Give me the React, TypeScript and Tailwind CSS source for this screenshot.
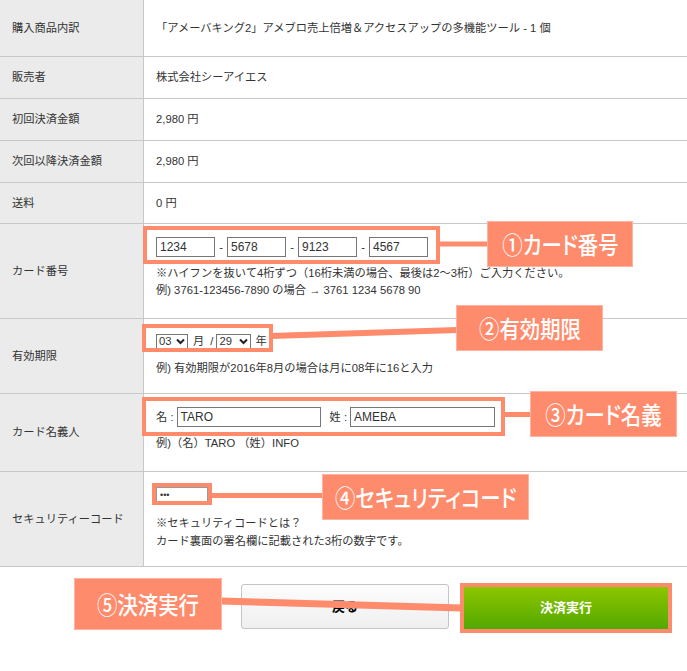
import React from 'react';

const rows = [
  { label: '購入商品内訳', value: '「アメーバキング2」アメブロ売上倍増＆アクセスアップの多機能ツール - 1 個', h: 'h-[57px]' },
  { label: '販売者', value: '株式会社シーアイエス', h: 'h-[42px]' },
  { label: '初回決済金額', value: '2,980 円', h: 'h-[42px]' },
  { label: '次回以降決済金額', value: '2,980 円', h: 'h-[42px]' },
  { label: '送料', value: '0 円', h: 'h-[41px]' },
];

const Select = ({ value, w }: { value: string; w: string }) => (
  <div className={`${w} h-[15px] border border-[#767676] flex items-center justify-between pl-[2px] pr-[2px] leading-none bg-white`}>
    <span>{value}</span>
    <svg width="9" height="7" viewBox="0 0 9 7">
      <path d="M1 1.5 L4.5 5 L8 1.5" stroke="#222" strokeWidth="2" fill="none" />
    </svg>
  </div>
);

const Callout = ({ text, cls }: { text: string; cls: string }) => (
  <div
    className={`absolute ${cls} bg-[#ff8b6d] border border-[#ffb39e] flex items-center justify-center text-white font-['Noto_Sans_CJK_JP',sans-serif] [font-feature-settings:'palt'] leading-none whitespace-nowrap`}
  >
    <span className="inline-block text-[24px] font-medium scale-x-[0.85]">{text}</span>
  </div>
);

const App = () => {
  return (
    <div className="relative w-[687px] h-[671px] bg-white overflow-hidden text-[11.25px] text-[#333] font-['Liberation_Sans','Noto_Sans_CJK_JP',sans-serif]">
      <div>
        {rows.map((r, i) => (
          <div key={i} className={`flex ${r.h} border-b border-[#c8c8c8]`}>
            <div className="w-[144px] shrink-0 bg-[#ebebeb] border-r border-[#c8c8c8] flex items-center pl-3">{r.label}</div>
            <div className="flex-1 flex items-center pl-3">{r.value}</div>
          </div>
        ))}

        {/* カード番号 */}
        <div className="flex h-[95px] border-b border-[#c8c8c8]">
          <div className="w-[144px] shrink-0 bg-[#ebebeb] border-r border-[#c8c8c8] flex items-center pl-3">カード番号</div>
          <div className="flex-1 pl-3 pt-[13px]">
            <div className="flex items-center">
              {['1234', '5678', '9123', '4567'].map((v, i) => (
                <React.Fragment key={v}>
                  {i > 0 && <span className="w-[12px] text-center">-</span>}
                  <input
                    defaultValue={v}
                    className="w-[59px] h-[20px] border border-[#767676] px-[3px] text-[12px] text-[#333] outline-none"
                  />
                </React.Fragment>
              ))}
            </div>
            <div className="mt-[8px] leading-[17px]">
              <p>※ハイフンを抜いて4桁ずつ（16桁未満の場合、最後は2〜3桁）ご入力ください。</p>
              <p>例) 3761-123456-7890 の場合 → 3761 1234 5678 90</p>
            </div>
          </div>
        </div>

        {/* 有効期限 */}
        <div className="flex h-[75px] border-b border-[#c8c8c8]">
          <div className="w-[144px] shrink-0 bg-[#ebebeb] border-r border-[#c8c8c8] flex items-center pl-3">有効期限</div>
          <div className="flex-1 pl-3 pt-[14px]">
            <div className="flex items-center">
              <Select value="03" w="w-[32px]" />
              <span className="ml-[5px]">月</span>
              <span className="ml-[6px]">/</span>
              <span className="ml-[3px]">
                <Select value="29" w="w-[35px]" />
              </span>
              <span className="ml-[4px]">年</span>
            </div>
            <p className="mt-[10px] leading-[17px]">例) 有効期限が2016年8月の場合は月に08年に16と入力</p>
          </div>
        </div>

        {/* カード名義人 */}
        <div className="flex h-[78px] border-b border-[#c8c8c8]">
          <div className="w-[144px] shrink-0 bg-[#ebebeb] border-r border-[#c8c8c8] flex items-center pl-3">カード名義人</div>
          <div className="flex-1 pl-3 pt-[13px]">
            <div className="flex items-center">
              <span>名 :</span>
              <input
                defaultValue="TARO"
                className="ml-[3px] w-[144px] h-[20px] border border-[#767676] px-[3px] text-[12px] text-[#333] outline-none"
              />
              <span className="ml-[9px]">姓 :</span>
              <input
                defaultValue="AMEBA"
                className="ml-[3px] w-[145px] h-[20px] border border-[#767676] px-[3px] text-[12px] text-[#333] outline-none"
              />
            </div>
            <p className="mt-[8px] leading-[17px]">例)（名）TARO （姓）INFO</p>
          </div>
        </div>

        {/* セキュリティーコード */}
        <div className="flex h-[95px] border-b border-[#c8c8c8]">
          <div className="w-[144px] shrink-0 bg-[#ebebeb] border-r border-[#c8c8c8] flex items-center pl-3">セキュリティーコード</div>
          <div className="flex-1 pl-3 pt-[15px]">
            <input
              type="password"
              defaultValue="123"
              className="block w-[52px] h-[15px] border border-[#999] px-[3px] text-[9px] text-[#333] outline-none"
            />
            <div className="mt-[12px] leading-[18px]">
              <p>※セキュリティコードとは？</p>
              <p>カード裏面の署名欄に記載された3桁の数字です。</p>
            </div>
          </div>
        </div>
      </div>

      {/* buttons */}
      <div className="flex justify-end items-end gap-[15px] pr-[19px] pt-[17px]">
        <button className="w-[208px] h-[45px] rounded-[3px] border border-[#c4c4c4] bg-gradient-to-b from-[#fdfdfd] to-[#efefef] text-[13px] font-bold text-black">
          戻る
        </button>
        <button className="w-[204px] h-[42px] bg-gradient-to-b from-[#8dc600] to-[#52a800] text-[13px] font-bold text-white">
          決済実行
        </button>
      </div>

      {/* annotations */}
      <div className="absolute left-[143px] top-[226px] w-[297px] h-[38px] border-4 border-[#ff8b6d]" />
      <div className="absolute left-[142px] top-[324px] w-[131px] h-[28px] border-4 border-[#ff8b6d]" />
      <div className="absolute left-[142px] top-[397px] w-[363px] h-[39px] border-4 border-[#ff8b6d]" />
      <div className="absolute left-[152px] top-[483px] w-[60px] h-[22px] border-4 border-[#ff8b6d]" />
      <div className="absolute left-[460px] top-[583px] w-[212px] h-[50px] border-4 border-[#ff8b6d]" />

      <svg className="absolute inset-0 pointer-events-none" width="687" height="671">
        <g stroke="#ff8b6d" strokeLinecap="butt">
          <line x1="438" y1="244" x2="488" y2="244" strokeWidth="5" />
          <line x1="271" y1="336" x2="457" y2="330" strokeWidth="6" />
          <line x1="503" y1="414.5" x2="531" y2="414.5" strokeWidth="5" />
          <line x1="210" y1="495.5" x2="323" y2="495.5" strokeWidth="5" />
          <line x1="221" y1="601" x2="462" y2="608" strokeWidth="7" />
        </g>
      </svg>

      <Callout text="①カード番号" cls="left-[487px] top-[221px] w-[146px] h-[46px]" />
      <Callout text="②有効期限" cls="left-[456px] top-[305px] w-[147px] h-[46px]" />
      <Callout text="③カード名義" cls="left-[530px] top-[391px] w-[147px] h-[46px]" />
      <Callout text="④セキュリティコード" cls="left-[322px] top-[474px] w-[207px] h-[46px]" />
      <Callout text="⑤決済実行" cls="left-[74px] top-[578px] w-[148px] h-[52px]" />
    </div>
  );
};

export default App;
